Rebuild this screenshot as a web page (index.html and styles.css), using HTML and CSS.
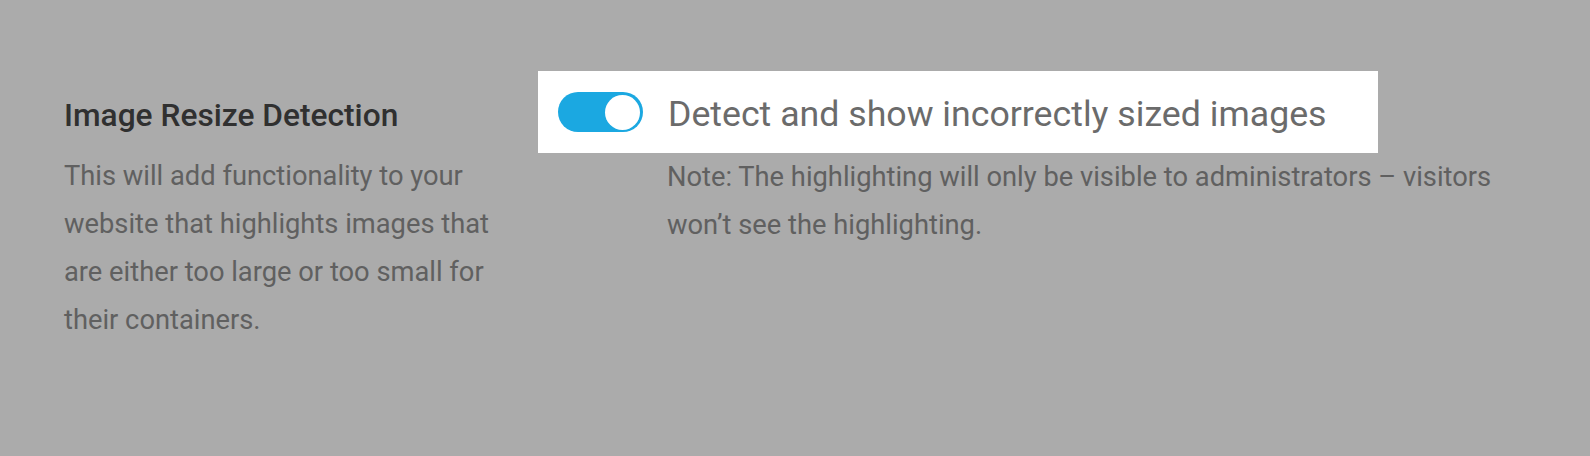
FILE: index.html
```html
<!DOCTYPE html>
<html lang="en">
<head>
    <meta charset="UTF-8">
    <meta name="viewport" content="width=device-width, initial-scale=1.0">
    <title>Image Resize Detection</title>
    <link rel="stylesheet" href="styles.css">
</head>
<body>
    <div class="setting-row">
        <div class="setting-info">
            <h2 class="setting-title">Image Resize Detection</h2>
            <p class="setting-desc">This will add functionality to your website that highlights images that are either too large or too small for their containers.</p>
        </div>
        <div class="setting-control">
            <label class="toggle-box">
                <span class="toggle on"><span class="knob"></span></span>
                <span class="toggle-label">Detect and show incorrectly sized images</span>
            </label>
            <p class="note">Note: The highlighting will only be visible to administrators – visitors won’t see the highlighting.</p>
        </div>
    </div>
</body>
</html>
```

FILE: styles.css
```css
body {
    background-color: #ababab;
    margin: 0;
    font-family: Roboto, 'Liberation Sans', sans-serif;
}

.setting-row {
    display: flex;
    padding: 71px 64px 0 64px;
}

.setting-info {
    width: 440px;
    margin-right: 34px;
    padding-top: 27px;
}

.setting-title {
    margin: 0 0 18px 0;
    font-size: 31.7px;
    line-height: 36px;
    font-weight: 500;
    color: #303030;
}

.setting-desc {
    margin: 0;
    font-size: 27.3px;
    line-height: 48px;
    color: #606060;
}

.setting-control {
    flex: 1;
}

.toggle-box {
    display: inline-flex;
    align-items: center;
    background-color: #ffffff;
    height: 82px;
    padding: 0 51px 0 20px;
}

.toggle {
    width: 85px;
    height: 40px;
    border-radius: 20px;
    background-color: #1ba8e1;
    display: flex;
    align-items: center;
    justify-content: flex-end;
    padding: 0 3px;
    box-sizing: border-box;
    margin-right: 25px;
}

.knob {
    width: 35px;
    height: 35px;
    border-radius: 50%;
    background-color: #ffffff;
}

.toggle-label {
    font-size: 35.7px;
    padding-top: 3px;
    color: #6b6b6b;
}

.note {
    margin: 0 0 0 129px;
    font-size: 27.3px;
    line-height: 48px;
    color: #606060;
}
```
